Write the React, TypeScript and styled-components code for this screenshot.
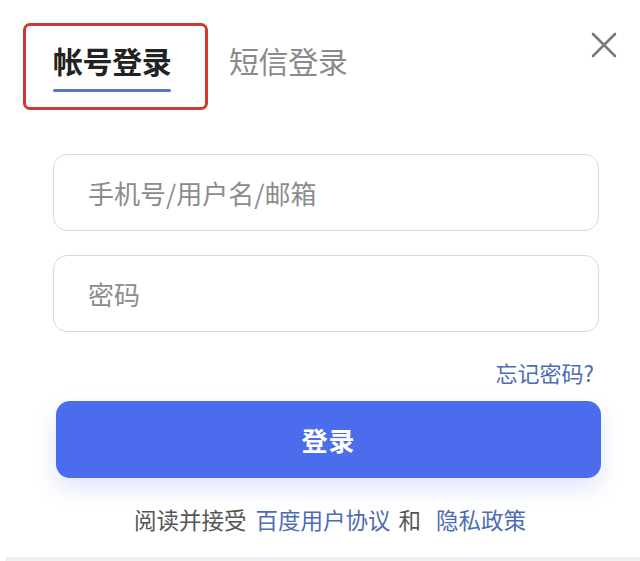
import React from 'react'
import styled, { createGlobalStyle } from 'styled-components';

const GlobalStyle = createGlobalStyle`
  html, body {
    margin: 0;
    padding: 0;
    background: #ffffff;
  }
  body {
    font-family: "Noto Sans CJK SC", "Noto Sans", sans-serif;
  }
`;

const Page = styled.div`
  width: 640px;
  height: 561px;
  display: flex;
  flex-direction: column;
  background: #fff;
  overflow: hidden;
`;

const Header = styled.div`
  display: flex;
  align-items: flex-start;
  padding: 23px 23px 0 23px;
  height: 87px;
`;

const ActiveTab = styled.div`
  box-sizing: border-box;
  width: 185px;
  height: 87px;
  border: 3px solid #d2382f;
  border-radius: 7px;
  padding: 11px 0 0 27px;
  display: flex;
  flex-direction: column;
  align-items: flex-start;
`;

const TabLabel = styled.span<{ $active?: boolean }>`
  font-size: 30px;
  line-height: 46px;
  letter-spacing: -0.4px;
  font-weight: ${(p) => (p.$active ? 700 : 400)};
  color: ${(p) => (p.$active ? '#222' : '#8a8a8a')};
`;

const Underline = styled.div`
  width: 118px;
  height: 3px;
  border-radius: 2px;
  background: #5b70cf;
  margin-top: 6px;
`;

const PlainTab = styled.div`
  margin-left: 21px;
  padding-top: 14px;
`;

const Close = styled.button`
  margin-left: auto;
  margin-top: 9px;
  width: 26px;
  height: 26px;
  padding: 0;
  border: none;
  background: none;
  cursor: pointer;
  display: flex;
`;

const Form = styled.div`
  display: flex;
  flex-direction: column;
  padding: 44px 0 0 53px;
  width: 546px;
`;

const Field = styled.div`
  box-sizing: border-box;
  height: 77px;
  border: 1.5px solid #d9d9d9;
  border-radius: 14px;
  display: flex;
  align-items: center;
  padding: 0 0 0 34px;
  margin-bottom: 24px;

  input {
    flex: 1;
    border: none;
    outline: none;
    background: transparent;
    font-family: inherit;
    font-size: 26px;
    color: #333;
    padding: 0;
    &::placeholder {
      color: #8c8c8c;
    }
  }
`;

const Forgot = styled.a`
  align-self: flex-end;
  margin: 1px 5px 0 0;
  font-size: 22px;
  line-height: 30px;
  color: #4d6cb3;
  text-decoration: none;
  cursor: pointer;
`;

const LoginButton = styled.button`
  margin: 14px 0 0 3px;
  width: 545px;
  height: 77px;
  border: none;
  border-radius: 14px;
  background: #4b6cec;
  color: #fff;
  font-family: inherit;
  font-size: 26px;
  font-weight: 700;
  letter-spacing: 1px;
  cursor: pointer;
  box-shadow: 0 10px 22px rgba(75, 108, 236, 0.18);
`;

const Agreement = styled.div`
  margin-top: 26px;
  display: flex;
  justify-content: center;
  align-items: center;
  padding-left: 28px;
  font-size: 22.5px;
  line-height: 30px;
  color: #555;
`;

const Link = styled.a<{ $gap?: number }>`
  color: #4d6cb3;
  text-decoration: none;
  margin: 0 8px 0 ${(p) => p.$gap ?? 9}px;
`;

const BottomRule = styled.div`
  margin: auto 0 0 5px;
  height: 4px;
  background: #f0f0f0;
`;

export default function App() {
  return (
    <Page>
      <GlobalStyle />
      <Header>
        <ActiveTab>
          <TabLabel $active>帐号登录</TabLabel>
          <Underline />
        </ActiveTab>
        <PlainTab>
          <TabLabel>短信登录</TabLabel>
        </PlainTab>
        <Close aria-label="关闭">
          <svg width="26" height="26" viewBox="0 0 26 26">
            <path d="M2 2 L24 24 M24 2 L2 24" stroke="#7a7a7a" strokeWidth="2.6" strokeLinecap="round" />
          </svg>
        </Close>
      </Header>
      <Form>
        <Field>
          <input placeholder="手机号/用户名/邮箱" />
        </Field>
        <Field>
          <input type="password" placeholder="密码" />
        </Field>
        <Forgot>忘记密码?</Forgot>
        <LoginButton>登录</LoginButton>
      </Form>
      <Agreement>
        阅读并接受<Link>百度用户协议</Link>和<Link $gap={15}>隐私政策</Link>
      </Agreement>
      <BottomRule />
    </Page>
  );
}
